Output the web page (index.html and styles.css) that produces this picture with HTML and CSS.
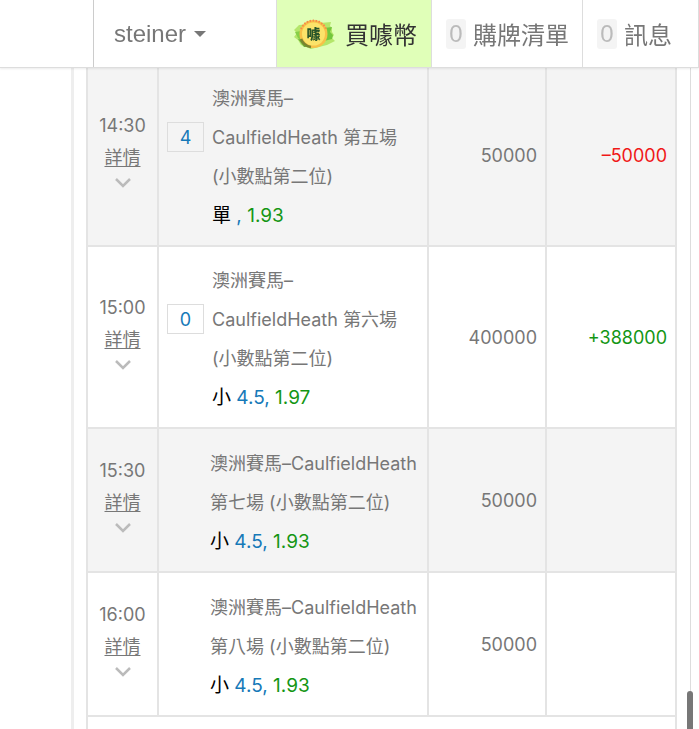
FILE: index.html
```
<!DOCTYPE html>
<html lang="zh-Hant">
<head>
<meta charset="UTF-8">
<meta name="viewport" content="width=device-width, initial-scale=1.0">
<title>steiner</title>
<link rel="stylesheet" href="styles.css">
</head>
<body>
<header class="topbar">
<button class="user" type="button">steiner<span class="caret"></span></button>
<a class="nav buy" href="#"><svg class="coin" viewBox="0 0 42 34" aria-hidden="true">
<path d="M6 8L38 5L37 9L39 11L39 15L41 18L39 21L42 24L34 28L18 32L8 28L5 23L1 20L4 16L1 13Z" fill="#b4e66a"/>
<path d="M31 11L39 10L37 15L40 18L39 22L31 24Z" fill="#72c63c"/>
<path d="M2 15L8 14L9 24L5 21Z" fill="#86cf48"/>
<path d="M5 22L10 23L17 30L11 30Z" fill="#6dad3b"/>
<circle cx="20.500" cy="17" r="14" fill="#f7c148"/>
<path d="M8 12a13.500 13.500 0 0 1 25 0" fill="none" stroke="#f58a4c" stroke-width="2" stroke-dasharray="1.500 1.500"/>
<circle cx="20.500" cy="17" r="11.500" fill="#fbe36a"/>
<path d="M8 22a13 13 0 0 0 10 8" fill="none" stroke="#79852f" stroke-width="2.500"/>
<text class="coin-text" x="20.500" y="22" text-anchor="middle">噱</text>
</svg>買噱幣</a>
<a class="nav cart" href="#"><span class="count">0</span>購牌清單</a>
<a class="nav news" href="#"><span class="count">0</span>訊息</a>
</header>
<main class="page">
<div class="panel">
<table class="bets">
<colgroup><col class="c-time"><col class="c-game"><col class="c-stake"><col class="c-win"></colgroup>
<tbody>
<tr class="odd">
<td class="time">14:30<br><a href="#">詳情</a><svg class="chev" viewBox="0 0 16 10"><path d="M1 1l7 7 7-7"/></svg></td>
<td><div class="game"><span class="score">4</span><div>澳洲賽馬–<br>CaulfieldHeath 第五場<br>(小數點第二位)<div class="bet"><span class="pick">單</span> <span class="line">,</span> <span class="odds">1.93</span></div></div></div></td>
<td class="num">50000</td>
<td class="num lose">–50000</td>
</tr>
<tr>
<td class="time">15:00<br><a href="#">詳情</a><svg class="chev" viewBox="0 0 16 10"><path d="M1 1l7 7 7-7"/></svg></td>
<td><div class="game"><span class="score">0</span><div>澳洲賽馬–<br>CaulfieldHeath 第六場<br>(小數點第二位)<div class="bet"><span class="pick">小</span> <span class="line">4.5,</span> <span class="odds">1.97</span></div></div></div></td>
<td class="num">400000</td>
<td class="num win">+388000</td>
</tr>
<tr class="odd">
<td class="time">15:30<br><a href="#">詳情</a><svg class="chev" viewBox="0 0 16 10"><path d="M1 1l7 7 7-7"/></svg></td>
<td><div class="game open"><div>澳洲賽馬–CaulfieldHeath<br>第七場 (小數點第二位)<div class="bet"><span class="pick">小</span> <span class="line">4.5,</span> <span class="odds">1.93</span></div></div></div></td>
<td class="num">50000</td>
<td class="num"></td>
</tr>
<tr>
<td class="time">16:00<br><a href="#">詳情</a><svg class="chev" viewBox="0 0 16 10"><path d="M1 1l7 7 7-7"/></svg></td>
<td><div class="game open"><div>澳洲賽馬–CaulfieldHeath<br>第八場 (小數點第二位)<div class="bet"><span class="pick">小</span> <span class="line">4.5,</span> <span class="odds">1.93</span></div></div></div></td>
<td class="num">50000</td>
<td class="num"></td>
</tr>
<tr><td class="more" colspan="4"></td></tr>
</tbody>
</table>
</div>
</main>
<div class="thumb"></div>
</body>
</html>
```
FILE: styles.css
```
*{box-sizing:border-box;}
body{margin:0;background:#fff;color:#777;font-family:"Inter","Noto Sans CJK TC",sans-serif;font-size:18px;}
a{color:inherit;}
.topbar{position:fixed;top:0;left:0;right:0;z-index:2;height:68px;padding-left:93px;display:flex;background:#fff;border-bottom:1px solid #ddd;box-shadow:0 1px 2px rgba(0,0,0,.08);font-family:"Liberation Sans","Noto Sans CJK TC",sans-serif;font-size:24px;}
.user{flex:1;display:flex;align-items:center;gap:8px;padding:0 20px;border:0;border-left:1px solid #ccc;background:none;color:#777;font:inherit;}
.caret{border:6px solid transparent;border-top-color:#777;border-bottom:0;}
.nav{display:flex;align-items:center;border-left:1px solid #ddd;text-decoration:none;white-space:nowrap;}
.buy{width:155px;padding-left:16px;gap:10px;background:#e0ffb8;color:#333;}
.cart{width:151px;padding-left:14px;gap:7px;}
.news{width:117px;padding-left:14px;gap:7px;border-right:1px solid #ddd;}
.count{width:20px;height:30px;line-height:30px;border-radius:3px;background:#f4f4f4;color:#bbb;text-align:center;}
.coin{width:42px;height:34px;}
.coin-text{font-size:14px;font-weight:900;fill:#29562a;}
.page{height:100vh;overflow:hidden;padding:63px 8px 0 71px;}
.panel{min-height:100%;border-left:3px solid #eee;border-right:1px solid #ddd;padding:0 13px 0 12px;}
.bets{width:100%;border-collapse:collapse;table-layout:fixed;}
.c-time{width:71px;}
.c-stake{width:118px;}
.c-win{width:130px;}
.bets td{border:2px solid #e4e4e4;padding:0 8px;}
.odd{background:#f4f4f4;}
.time{text-align:center;line-height:32px;}
.bets a{text-underline-offset:2px;}
.chev{display:block;width:16px;height:10px;margin:4px auto 13px;fill:none;stroke:#bbb;stroke-width:2.5;}
.game{display:flex;gap:8px;padding:14px 0 10px;line-height:39px;white-space:nowrap;}
.open{padding:15px 0 10px 43px;}
.score{width:37px;height:30px;margin-top:43px;line-height:30px;border:1px solid #ddd;color:#1679b8;text-align:center;}
.bet{font-size:19px;}
.pick{color:#000;}
.line{color:#1679b8;}
.odds,.win{color:#149614;}
.num{text-align:right;}
.bets .lose{color:#f01818;}
.more{height:80px;}
.thumb{position:fixed;z-index:3;right:6px;bottom:0;width:6px;height:38px;border-radius:3px 3px 0 0;background:#777;}
```
